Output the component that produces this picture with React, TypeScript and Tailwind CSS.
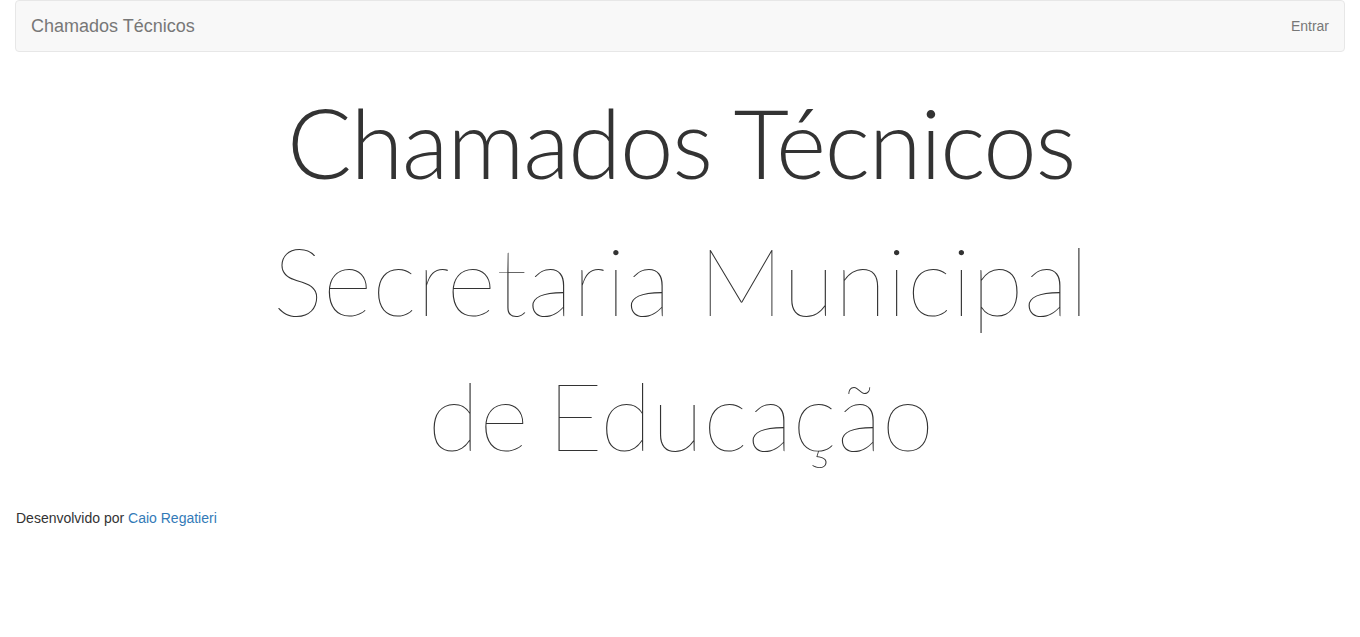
export default function App() {
  return (
    <div className="min-h-[637px] bg-white px-[15px] font-['Liberation_Sans',Arial,sans-serif] text-[14px] text-[#333]">
      <nav className="flex h-[52px] items-center justify-between rounded-[4px] border border-[#e7e7e7] bg-[#f8f8f8] px-[15px]">
        <span className="text-[18px] leading-[20px] text-[#777]">Chamados Técnicos</span>
        <span className="text-[14px] leading-[20px] text-[#777]">Entrar</span>
      </nav>
      <div className="mt-[20px] flex flex-col items-center pl-[2px] text-center font-['Lato',sans-serif]">
        <h1 className="text-[96px] font-light leading-[140px] tracking-[-1.3px] text-[#333]">Chamados Técnicos</h1>
        <h2 className="flex flex-col items-center text-[95px] font-thin leading-[135px] text-[#333]">
          <span className="tracking-[0.35px]">Secretaria Municipal</span>
          <span className="[word-spacing:-8px]">de Educação</span>
        </h2>
      </div>
      <p className="mt-[26px] pl-[1px] leading-[20px]">
        Desenvolvido por <a className="text-[#337ab7]">Caio Regatieri</a>
      </p>
    </div>
  )
}
